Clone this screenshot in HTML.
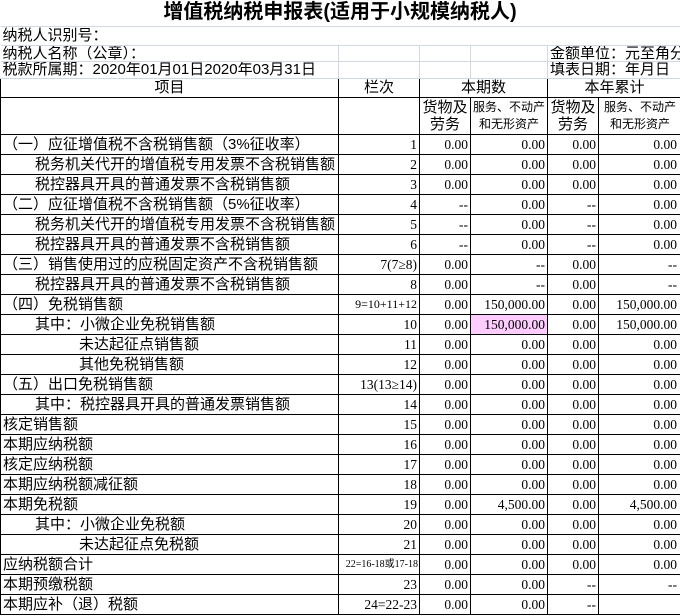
<!DOCTYPE html>
<html><head><meta charset="utf-8"><style>
body{margin:0;background:#fff;width:680px;height:616px;overflow:hidden;font-family:"Liberation Sans","Noto Sans CJK SC","WenQuanYi Zen Hei",sans-serif;font-size:15px;color:#000}
table{border-collapse:collapse;table-layout:fixed;width:681px;position:absolute;left:0;top:0}
td{padding:0 2px;white-space:nowrap;overflow:hidden;line-height:15px;border:1px solid #000}
.g td{border:1px solid #d0d7e5}
.n{text-align:right;font-family:"Liberation Serif","Noto Sans CJK SC",serif;font-size:13.5px}
.c{text-align:center}
.i1{padding-left:34px}.i2{padding-left:78px}
.pk{background:#ffccff}
tr.d{height:20px}
tr.d td:last-child{padding-right:4px}
</style></head><body>
<table>
<colgroup><col style="width:338px"><col style="width:81px"><col style="width:51px"><col style="width:77px"><col style="width:51px"><col style="width:83px"></colgroup>
<tr style="height:26px"><td colspan="6" style="border:none;text-align:center;font-size:20px;font-weight:bold;padding-left:0">增值税纳税申报表(适用于小规模纳税人)</td></tr>
<tr class="g" style="height:19px"><td colspan="6" style="border-left:none;border-right:none">纳税人识别号：</td></tr>
<tr class="g" style="height:16px"><td style="border-left:none">纳税人名称（公章）：</td><td></td><td></td><td></td><td colspan="2" style="border-right:none">金额单位：元至角分</td></tr>
<tr class="g" style="height:17px"><td style="border-left:none">税款所属期：2020年01月01日2020年03月31日</td><td></td><td></td><td></td><td colspan="2" style="border-right:none">填表日期：年月日</td></tr>
<tr style="height:19px"><td class="c">项目</td><td class="c">栏次</td><td colspan="2" class="c">本期数</td><td colspan="2" class="c">本年累计</td></tr>
<tr style="height:37px"><td></td><td></td><td class="c" style="line-height:17px">货物及<br>劳务</td><td class="c" style="font-size:12px;line-height:17px;padding:0">服务、不动产<br>和无形资产</td><td class="c" style="line-height:17px">货物及<br>劳务</td><td class="c" style="font-size:12px;line-height:17px;padding:0">服务、不动产<br>和无形资产</td></tr>
<tr class="d"><td>（一）应征增值税不含税销售额（3%征收率）</td><td class="n">1</td><td class="n">0.00</td><td class="n">0.00</td><td class="n">0.00</td><td class="n">0.00</td></tr>
<tr class="d"><td class="i1">税务机关代开的增值税专用发票不含税销售额</td><td class="n">2</td><td class="n">0.00</td><td class="n">0.00</td><td class="n">0.00</td><td class="n">0.00</td></tr>
<tr class="d"><td class="i1">税控器具开具的普通发票不含税销售额</td><td class="n">3</td><td class="n">0.00</td><td class="n">0.00</td><td class="n">0.00</td><td class="n">0.00</td></tr>
<tr class="d"><td>（二）应征增值税不含税销售额（5%征收率）</td><td class="n">4</td><td class="n">--</td><td class="n">0.00</td><td class="n">--</td><td class="n">0.00</td></tr>
<tr class="d"><td class="i1">税务机关代开的增值税专用发票不含税销售额</td><td class="n">5</td><td class="n">--</td><td class="n">0.00</td><td class="n">--</td><td class="n">0.00</td></tr>
<tr class="d"><td class="i1">税控器具开具的普通发票不含税销售额</td><td class="n">6</td><td class="n">--</td><td class="n">0.00</td><td class="n">--</td><td class="n">0.00</td></tr>
<tr class="d"><td>（三）销售使用过的应税固定资产不含税销售额</td><td class="n">7(7≥8)</td><td class="n">0.00</td><td class="n">--</td><td class="n">0.00</td><td class="n">--</td></tr>
<tr class="d"><td class="i1">税控器具开具的普通发票不含税销售额</td><td class="n">8</td><td class="n">0.00</td><td class="n">--</td><td class="n">0.00</td><td class="n">--</td></tr>
<tr class="d"><td>（四）免税销售额</td><td class="n" style="font-size:12px">9=10+11+12</td><td class="n">0.00</td><td class="n">150,000.00</td><td class="n">0.00</td><td class="n">150,000.00</td></tr>
<tr class="d"><td class="i1">其中：小微企业免税销售额</td><td class="n">10</td><td class="n">0.00</td><td class="n pk">150,000.00</td><td class="n">0.00</td><td class="n">150,000.00</td></tr>
<tr class="d"><td class="i2">未达起征点销售额</td><td class="n">11</td><td class="n">0.00</td><td class="n">0.00</td><td class="n">0.00</td><td class="n">0.00</td></tr>
<tr class="d"><td class="i2">其他免税销售额</td><td class="n">12</td><td class="n">0.00</td><td class="n">0.00</td><td class="n">0.00</td><td class="n">0.00</td></tr>
<tr class="d"><td>（五）出口免税销售额</td><td class="n">13(13≥14)</td><td class="n">0.00</td><td class="n">0.00</td><td class="n">0.00</td><td class="n">0.00</td></tr>
<tr class="d"><td class="i1">其中：税控器具开具的普通发票销售额</td><td class="n">14</td><td class="n">0.00</td><td class="n">0.00</td><td class="n">0.00</td><td class="n">0.00</td></tr>
<tr class="d"><td>核定销售额</td><td class="n">15</td><td class="n">0.00</td><td class="n">0.00</td><td class="n">0.00</td><td class="n">0.00</td></tr>
<tr class="d"><td>本期应纳税额</td><td class="n">16</td><td class="n">0.00</td><td class="n">0.00</td><td class="n">0.00</td><td class="n">0.00</td></tr>
<tr class="d"><td>核定应纳税额</td><td class="n">17</td><td class="n">0.00</td><td class="n">0.00</td><td class="n">0.00</td><td class="n">0.00</td></tr>
<tr class="d"><td>本期应纳税额减征额</td><td class="n">18</td><td class="n">0.00</td><td class="n">0.00</td><td class="n">0.00</td><td class="n">0.00</td></tr>
<tr class="d"><td>本期免税额</td><td class="n">19</td><td class="n">0.00</td><td class="n">4,500.00</td><td class="n">0.00</td><td class="n">4,500.00</td></tr>
<tr class="d"><td class="i1">其中：小微企业免税额</td><td class="n">20</td><td class="n">0.00</td><td class="n">0.00</td><td class="n">0.00</td><td class="n">0.00</td></tr>
<tr class="d"><td class="i2">未达起征点免税额</td><td class="n">21</td><td class="n">0.00</td><td class="n">0.00</td><td class="n">0.00</td><td class="n">0.00</td></tr>
<tr class="d"><td>应纳税额合计</td><td class="n" style="font-size:10px;padding:0 1px">22=16-18或17-18</td><td class="n">0.00</td><td class="n">0.00</td><td class="n">0.00</td><td class="n">0.00</td></tr>
<tr class="d"><td>本期预缴税额</td><td class="n">23</td><td class="n">0.00</td><td class="n">0.00</td><td class="n">--</td><td class="n">--</td></tr>
<tr class="d"><td>本期应补（退）税额</td><td class="n">24=22-23</td><td class="n">0.00</td><td class="n">0.00</td><td class="n">--</td><td class="n"></td></tr>
</table>
</body></html>
